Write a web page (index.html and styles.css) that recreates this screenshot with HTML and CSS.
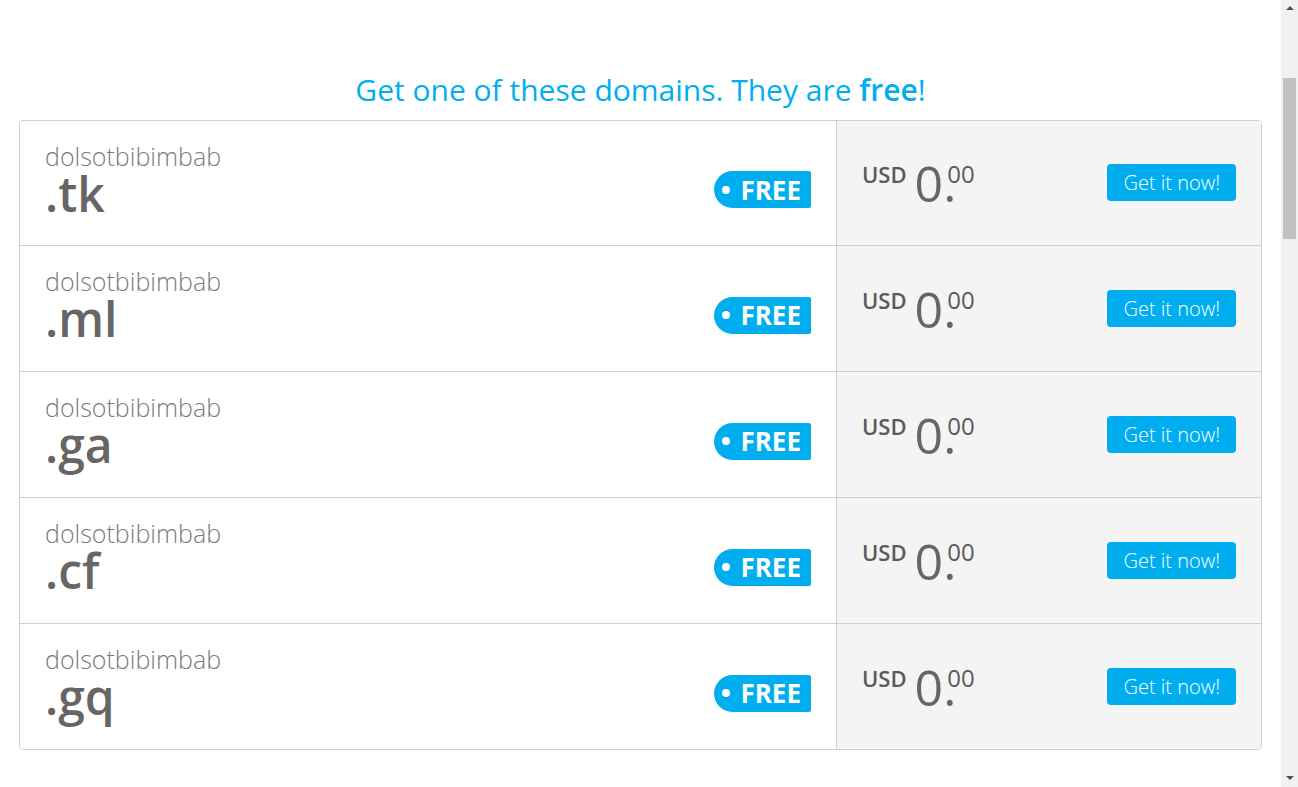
FILE: index.html
```html
<!DOCTYPE html>
<html lang="en">
<head>
    <meta charset="UTF-8">
    <meta name="viewport" content="width=device-width, initial-scale=1.0">
    <title>Free domains</title>
    <link rel="stylesheet" href="styles.css">
</head>
<body>
    <h2 class="offer-title">Get one of these domains. They are <strong>free</strong>!</h2>

    <div class="domain-list">
        <div class="domain-row">
            <div class="domain-info">
                <div class="domain-name">
                    <span class="name">dolsotbibimbab</span>
                    <span class="tld">.tk</span>
                </div>
                <span class="free-tag">FREE</span>
            </div>
            <div class="domain-price">
                <div class="price"><span class="currency">USD</span><span class="amount">0.</span><span class="cents">00</span></div>
                <button class="get-btn">Get it now!</button>
            </div>
        </div>
        <div class="domain-row">
            <div class="domain-info">
                <div class="domain-name">
                    <span class="name">dolsotbibimbab</span>
                    <span class="tld">.ml</span>
                </div>
                <span class="free-tag">FREE</span>
            </div>
            <div class="domain-price">
                <div class="price"><span class="currency">USD</span><span class="amount">0.</span><span class="cents">00</span></div>
                <button class="get-btn">Get it now!</button>
            </div>
        </div>
        <div class="domain-row">
            <div class="domain-info">
                <div class="domain-name">
                    <span class="name">dolsotbibimbab</span>
                    <span class="tld">.ga</span>
                </div>
                <span class="free-tag">FREE</span>
            </div>
            <div class="domain-price">
                <div class="price"><span class="currency">USD</span><span class="amount">0.</span><span class="cents">00</span></div>
                <button class="get-btn">Get it now!</button>
            </div>
        </div>
        <div class="domain-row">
            <div class="domain-info">
                <div class="domain-name">
                    <span class="name">dolsotbibimbab</span>
                    <span class="tld">.cf</span>
                </div>
                <span class="free-tag">FREE</span>
            </div>
            <div class="domain-price">
                <div class="price"><span class="currency">USD</span><span class="amount">0.</span><span class="cents">00</span></div>
                <button class="get-btn">Get it now!</button>
            </div>
        </div>
        <div class="domain-row">
            <div class="domain-info">
                <div class="domain-name">
                    <span class="name">dolsotbibimbab</span>
                    <span class="tld">.gq</span>
                </div>
                <span class="free-tag">FREE</span>
            </div>
            <div class="domain-price">
                <div class="price"><span class="currency">USD</span><span class="amount">0.</span><span class="cents">00</span></div>
                <button class="get-btn">Get it now!</button>
            </div>
        </div>
    </div>

    <!-- page scrollbar, drawn since the browser hides its own -->
    <div class="scrollbar">
        <span class="scroll-arrow up"></span>
        <span class="scroll-thumb"></span>
        <span class="scroll-arrow down"></span>
    </div>
</body>
</html>
```

FILE: styles.css
```css
body { margin: 0; padding: 70px 36px 0 19px; font-family: "Open Sans", "Liberation Sans", sans-serif; color: #666; background: #fff; }

.offer-title { margin: 0 0 10px; font-size: 30px; line-height: 40px; font-weight: 400; color: #00aeef; text-align: center; }
.offer-title strong { font-weight: 600; }

.domain-list { border: 1px solid #cfcfcf; border-radius: 4px; overflow: hidden; }
.domain-row { display: flex; height: 125px; border-top: 1px solid #cfcfcf; }
.domain-row:first-child { border-top: 0; height: 124px; }

.domain-info { flex: 0 0 817px; display: flex; align-items: center; justify-content: space-between; padding: 0 25px; box-sizing: border-box; border-right: 1px solid #cfcfcf; background: #fff; }
.domain-name { display: flex; flex-direction: column; }
.name { font-size: 25px; line-height: 26px; font-weight: 300; color: #7b7b7b; margin-top: -5px; }
.tld { font-size: 48px; line-height: 50px; font-weight: 600; color: #666; }

.free-tag { display: inline-flex; align-items: center; gap: 10px; height: 37px; margin-top: 13px; padding: 0 10px 0 8px; border-radius: 18.5px 2px 2px 18.5px; background: #00aeef; color: #fff; font-size: 26px; font-weight: 700; box-sizing: border-box; }
.free-tag::before { content: ""; width: 8px; height: 8px; border-radius: 50%; background: #fff; }

.domain-price { flex: 1; display: flex; align-items: center; justify-content: space-between; padding: 0 25px; background: #f4f4f4; }
.price { display: flex; align-items: flex-start; height: 40px; }
.currency { font-size: 22px; line-height: 22px; font-weight: 600; color: #5a5a5a; margin-right: 8px; }
.amount { font-size: 50px; line-height: 40px; font-weight: 400; color: #666; }
.cents { font-size: 24px; line-height: 22px; font-weight: 400; color: #5a5a5a; margin-left: -9px; }

.get-btn { height: 37px; padding: 0 16px; margin-top: -1px; border: 0; border-radius: 4px; background: #00aeef; color: #fff; font-family: inherit; font-size: 20px; font-weight: 300; cursor: pointer; }
.get-btn:hover { background: #0096ce; }

.scrollbar { position: fixed; top: 0; right: 0; bottom: 0; width: 17px; background: #f1f1f1; }
.scroll-thumb { position: absolute; top: 78px; left: 2px; width: 13px; height: 161px; background: #c1c1c1; }
.scroll-arrow { position: absolute; left: 5px; width: 0; height: 0; border-left: 4px solid transparent; border-right: 4px solid transparent; }
.scroll-arrow.up { top: 6px; border-bottom: 4px solid #505050; }
.scroll-arrow.down { bottom: 7px; border-top: 4px solid #505050; }
```
